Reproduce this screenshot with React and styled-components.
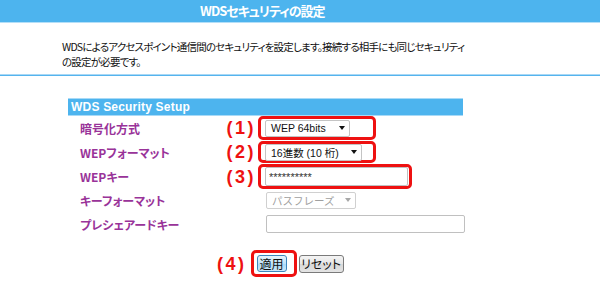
import React from "react";
import styled, { createGlobalStyle } from "styled-components";

const Global = createGlobalStyle`
  html, body { margin: 0; padding: 0; background: #ffffff; }
  body { font-family: "Liberation Sans", "Noto Sans CJK JP", sans-serif; color: #000; }
`;

const JP = `"Noto Sans CJK JP", "Liberation Sans", sans-serif`;

const Page = styled.div`
  width: 600px;
  height: 285px;
  overflow: hidden;
  background: #fff;
`;

const TitleBar = styled.div`
  height: 22px;
  background: #4db4ee;
  border-bottom: 1px solid #b4dff8;
  display: flex;
  align-items: center;
  padding-left: 200px;
`;

const TitleText = styled.h1`
  margin: 0;
  font-family: ${JP};
  font-feature-settings: "palt";
  font-size: 13px;
  font-weight: 700;
  letter-spacing: -1px;
  color: #fff;
  line-height: 22px;
`;

const Description = styled.p`
  margin: 16px 0 0 62px;
  font-family: ${JP};
  font-feature-settings: "palt";
  font-size: 10.5px;
  letter-spacing: -0.8px;
  line-height: 15px;
  white-space: nowrap;
  color: #111;
`;

const Separator = styled.div`
  margin-top: 5px;
  border-top: 1px solid #a9d8f5;
  border-bottom: 1px solid #55b4ee;
`;

const Section = styled.section`
  margin: 22px 0 0 68px;
  width: 395px;
`;

const SectionBar = styled.div`
  height: 16px;
  background: #4db4ee;
  border-top: 1px solid #a8daf7;
  border-bottom: 1px solid #a8daf7;
  padding-left: 3px;
  display: flex;
  align-items: center;
  font-family: "Liberation Sans", sans-serif;
  font-size: 12px;
  font-weight: 700;
  letter-spacing: 0.2px;
  color: #fff;
`;

const Row = styled.div`
  display: grid;
  grid-template-columns: 145px 45px auto;
  height: 24px;
  align-items: center;
`;

const Label = styled.div`
  padding-left: 12px;
  font-family: ${JP};
  font-feature-settings: "palt";
  font-size: 12px;
  font-weight: 700;
  color: #993399;
  white-space: nowrap;
`;

const Mark = styled.div`
  font-family: "Liberation Sans", sans-serif;
  font-size: 18px;
  font-weight: 700;
  letter-spacing: 2.5px;
  color: #ee1111;
  text-align: right;
  padding-right: 2px;
  line-height: 20px;
  white-space: nowrap;
`;

const Marked = styled.div`
  box-sizing: border-box;
  display: flex;
  align-items: center;
  width: ${(p) => (p.$w ? `${p.$w}px` : "auto")};
  height: ${(p) => (p.$h ? `${p.$h}px` : "auto")};
  border: 3px solid ${(p) => (p.$on ? "#ee1111" : "transparent")};
  border-radius: 5px;
  padding-left: ${(p) => p.$pl ?? 4}px;
`;

const SelectBox = styled.div`
  box-sizing: border-box;
  width: ${(p) => p.$w}px;
  height: 17px;
  display: flex;
  align-items: center;
  justify-content: space-between;
  padding: 0 4px 0 5px;
  border: 1px solid ${(p) => (p.$disabled ? "#d0d0d0" : "#c4c4c4")};
  border-radius: 2px;
  background: #fff;
  font-family: "Liberation Sans", "Noto Sans CJK JP", sans-serif;
  font-size: 10.5px;
  color: ${(p) => (p.$disabled ? "#a0a0a0" : "#111")};
  white-space: nowrap;
`;

const Caret = styled.span`
  width: 0;
  height: 0;
  border-left: 3.5px solid transparent;
  border-right: 3.5px solid transparent;
  border-top: 4px solid ${(p) => (p.$disabled ? "#a8a8a8" : "#111")};
`;

const TextInput = styled.input`
  box-sizing: border-box;
  width: ${(p) => p.$w}px;
  height: ${(p) => p.$h}px;
  margin: 0;
  padding: 0 3px;
  border: 1px solid #c0c0c0;
  border-radius: 2px;
  background: #fff;
  font-family: "Liberation Sans", sans-serif;
  font-size: 11px;
  color: #333;
  outline: none;
`;

const ButtonRow = styled.div`
  margin-top: 14px;
  padding-left: 149px;
  display: flex;
  align-items: center;
`;

const Button = styled.button`
  box-sizing: border-box;
  width: ${(p) => p.$w}px;
  height: ${(p) => p.$h}px;
  margin: 0;
  padding: 0;
  border: 1px solid ${(p) => (p.$primary ? "#3d86bd" : "#7a7a7a")};
  border-radius: 3px;
  background: ${(p) =>
    p.$primary
      ? "linear-gradient(#e8f5fd, #bfe3fa 50%, #a7d8f7 51%, #cdeafb)"
      : "linear-gradient(#f4f4f4, #e6e6e6 50%, #d8d8d8 51%, #e4e4e4)"};
  font-family: ${JP};
  font-feature-settings: "palt";
  font-size: 12px;
  line-height: 1;
  color: #111;
`;

const Gap = styled.span`
  width: ${(p) => p.$w}px;
`;

export default function App() {
  return (
    <Page>
      <Global />
      <TitleBar>
        <TitleText>WDSセキュリティの設定</TitleText>
      </TitleBar>
      <Description>
        WDSによるアクセスポイント通信間のセキュリティを設定します。接続する相手にも同じセキュリティ
        <br />
        の設定が必要です。
      </Description>
      <Separator />
      <Section>
        <SectionBar>WDS Security Setup</SectionBar>
        <Row>
          <Label>暗号化方式</Label>
          <Mark>(1)</Mark>
          <Marked $on $w={118} $h={24}>
            <SelectBox $w={85}>
              WEP 64bits <Caret />
            </SelectBox>
          </Marked>
        </Row>
        <Row>
          <Label>WEPフォーマット</Label>
          <Mark>(2)</Mark>
          <Marked $on $w={118} $h={22}>
            <SelectBox $w={97}>
              16進数 (10 桁) <Caret />
            </SelectBox>
          </Marked>
        </Row>
        <Row>
          <Label>WEPキー</Label>
          <Mark>(3)</Mark>
          <Marked $on $w={154} $h={25}>
            <TextInput $w={143} $h={19} readOnly value="**********" />
          </Marked>
        </Row>
        <Row>
          <Label>キーフォーマット</Label>
          <span />
          <Marked $pl={5}>
            <SelectBox $w={90} $disabled>
              パスフレーズ <Caret $disabled />
            </SelectBox>
          </Marked>
        </Row>
        <Row>
          <Label>プレシェアードキー</Label>
          <span />
          <Marked $pl={5}>
            <TextInput $w={199} $h={18} readOnly value="" />
          </Marked>
        </Row>
        <ButtonRow>
          <Mark>(4)</Mark>
          <Gap $w={2} />
          <Marked $on $w={46} $h={27} $pl={3}>
            <Button $primary $w={30} $h={17}>
              適用
            </Button>
          </Marked>
          <Gap $w={2} />
          <Button $w={45} $h={18}>
            リセット
          </Button>
        </ButtonRow>
      </Section>
    </Page>
  );
}
